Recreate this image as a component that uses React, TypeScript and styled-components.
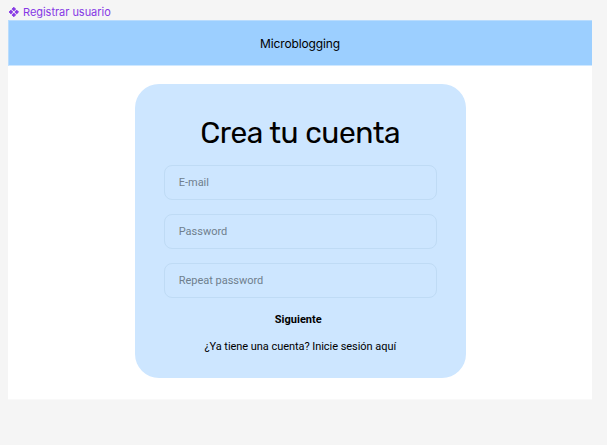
import React from "react";
import styled, { createGlobalStyle } from "styled-components";

const Global = createGlobalStyle`
  * { box-sizing: border-box; }
  body { margin: 0; background: #f5f5f5; }
`;

const Canvas = styled.main`
  width: 607px;
  height: 445px;
  padding: 4px 15px 0 8px;
  background: #f5f5f5;
  overflow: hidden;
`;

const FrameLabel = styled.div`
  display: flex;
  align-items: center;
  gap: 3px;
  height: 16px;
  font: 11px/16px Inter, sans-serif;
  letter-spacing: -0.03px;
  color: #8638e5;
  white-space: nowrap;
`;

const Frame = styled.section`
  width: 584px;
  height: 380px;
  border-bottom: 1px solid #f9f9f9;
  background: #fff;
`;

const TopBar = styled.header`
  display: flex;
  align-items: center;
  justify-content: center;
  height: 46px;
  border: 1px solid #b9dcfd;
  border-bottom-color: #cfe8ff;
  border-right: 0;
  background: #9ccfff;
  font: 12px/16px Inter, sans-serif;
  letter-spacing: -0.14px;
  color: #000;
  padding: 2px 1px 0 0;
`;

const Card = styled.form`
  display: flex;
  flex-direction: column;
  align-items: center;
  width: 331.5px;
  height: 294px;
  margin: 18px 0 0 126.5px;
  padding-top: 30px;
  border-radius: 24px;
  background: #cde6ff;
  font-family: Roboto, sans-serif;
  color: #000;
`;

const Title = styled.h1`
  margin: 0 0 13px;
  font: 400 30px/38px Rubik, Roboto, sans-serif;
  letter-spacing: -0.43px;
  white-space: nowrap;
`;

const Field = styled.input`
  width: 273px;
  height: 35px;
  margin: 0 0 14px;
  padding: 0 14px;
  border: 1px solid #bfdbf5;
  border-radius: 8px;
  background: transparent;
  font: 11px/16px Roboto, sans-serif;
  letter-spacing: -0.02px;
  outline: none;
  &::placeholder { color: #6f7f8d; opacity: 1; }
`;

const Submit = styled.button`
  margin-right: 4px;
  padding: 0;
  border: 0;
  background: none;
  font: 700 11px/16px Roboto, sans-serif;
  color: #000;
`;

const Hint = styled.p`
  margin: 11px 0 0;
  font-size: 11px;
  line-height: 16px;
  letter-spacing: -0.05px;
  white-space: nowrap;
`;

export default function App() {
  return (
    <Canvas>
      <Global />
      <FrameLabel>
        <svg width="12" height="12" viewBox="0 0 12 12" fill="currentColor" stroke="currentColor" strokeWidth=".8" strokeLinejoin="round">
          <path d="M5.8 1.2 7.7 3.1 5.8 5 3.9 3.1zM5.8 7 7.7 8.9 5.8 10.8 3.9 8.9zM2.9 4.1 4.8 6 2.9 7.9 1 6zM8.7 4.1 10.6 6 8.7 7.9 6.8 6z" />
        </svg>
        Registrar usuario
      </FrameLabel>
      <Frame>
        <TopBar>Microblogging</TopBar>
        <Card>
          <Title>Crea tu cuenta</Title>
          <Field placeholder="E-mail" />
          <Field placeholder="Password" />
          <Field placeholder="Repeat password" />
          <Submit type="button">Siguiente</Submit>
          <Hint>¿Ya tiene una cuenta? Inicie sesión aquí</Hint>
        </Card>
      </Frame>
    </Canvas>
  );
}
